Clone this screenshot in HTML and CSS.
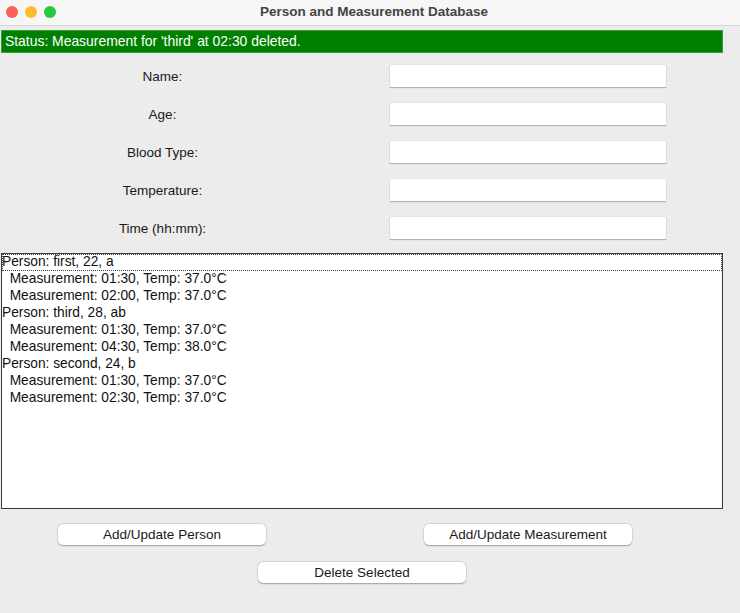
FILE: index.html
```html
<!DOCTYPE html>
<html>
<head>
<meta charset="utf-8">
<link rel="stylesheet" href="styles.css">
</head>
<body>
<div class="window">
  <div class="titlebar">
    <div class="lights">
      <span class="light red"></span>
      <span class="light yellow"></span>
      <span class="light green"></span>
    </div>
    <div class="title">Person and Measurement Database</div>
  </div>
  <div class="content">
    <div class="status">Status: Measurement for 'third' at 02:30 deleted.</div>
    <div class="form">
      <label class="label">Name:</label><div class="entry"></div>
      <label class="label">Age:</label><div class="entry"></div>
      <label class="label">Blood Type:</label><div class="entry"></div>
      <label class="label">Temperature:</label><div class="entry"></div>
      <label class="label">Time (hh:mm):</label><div class="entry"></div>
    </div>
    <div class="listbox">
      <div class="row focused">Person: first, 22, a</div>
      <div class="row">&nbsp; Measurement: 01:30, Temp: 37.0°C</div>
      <div class="row">&nbsp; Measurement: 02:00, Temp: 37.0°C</div>
      <div class="row">Person: third, 28, ab</div>
      <div class="row">&nbsp; Measurement: 01:30, Temp: 37.0°C</div>
      <div class="row">&nbsp; Measurement: 04:30, Temp: 38.0°C</div>
      <div class="row">Person: second, 24, b</div>
      <div class="row">&nbsp; Measurement: 01:30, Temp: 37.0°C</div>
      <div class="row">&nbsp; Measurement: 02:30, Temp: 37.0°C</div>
    </div>
    <div class="buttons">
      <button class="btn">Add/Update Person</button>
      <button class="btn">Add/Update Measurement</button>
      <button class="btn wide">Delete Selected</button>
    </div>
  </div>
</div>
</body>
</html>
```
FILE: styles.css
```css
* { box-sizing: border-box; }
html, body { margin: 0; padding: 0; }
body {
  width: 740px;
  height: 613px;
  background: #ececec;
  font-family: "Liberation Sans", Arial, sans-serif;
  font-size: 13.5px;
  color: #1a1a1a;
  overflow: hidden;
}
.titlebar {
  height: 26px;
  background: #f6f6f6;
  border-bottom: 1px solid #d8d8d8;
  display: flex;
  align-items: center;
  position: relative;
}
.lights {
  display: flex;
  gap: 7px;
  padding-left: 6px;
  margin-top: -2px;
}
.light {
  width: 12px;
  height: 12px;
  border-radius: 50%;
  display: block;
}
.red { background: #fe5f57; }
.yellow { background: #febc2e; }
.green { background: #28c840; }
.title {
  flex: 1;
  text-align: center;
  font-weight: bold;
  color: #444444;
  margin-left: -48px;
  margin-top: -3px;
  font-size: 13.5px;
}
.content {
  padding: 4px 17px 0 1px;
}
.status {
  height: 23px;
  background: #008000;
  border: 1px solid #3a9a3a;
  color: #ffffff;
  font-size: 13.9px;
  line-height: 21px;
  padding-left: 3px;
}
.form {
  display: grid;
  grid-template-columns: 389px 276px;
  row-gap: 16px;
  padding-top: 12px;
  align-items: center;
}
.label {
  text-align: center;
  padding-right: 66px;
  font-size: 13.5px;
}
.entry {
  height: 22px;
  background: #ffffff;
  box-shadow: 0 1px 1px rgba(0,0,0,0.22), 0 0 0 0.5px rgba(0,0,0,0.06);
}
.listbox {
  margin-top: 14px;
  height: 256px;
  background: #ffffff;
  border: 1px solid #3a3a3a;
  font-size: 13.75px;
  color: #111111;
}
.row {
  height: 17px;
  line-height: 16px;
  padding-left: 0;
  white-space: nowrap;
}
.row.focused {
  outline: 1px dotted #444;
  outline-offset: -1px;
}
.buttons {
  display: grid;
  grid-template-columns: 208px 208px;
  column-gap: 158px;
  row-gap: 17px;
  padding-left: 57px;
  padding-top: 15px;
}
.btn {
  height: 21px;
  background: #ffffff;
  border: none;
  border-radius: 5px;
  box-shadow: 0 0.5px 1.5px rgba(0,0,0,0.3), 0 0 0 0.5px rgba(0,0,0,0.08);
  font-family: "Liberation Sans", Arial, sans-serif;
  font-size: 13.5px;
  color: #1a1a1a;
  padding: 0;
}
.btn.wide {
  grid-column: 1 / span 2;
  width: 208px;
  justify-self: start;
  margin-left: 200px;
}
```
